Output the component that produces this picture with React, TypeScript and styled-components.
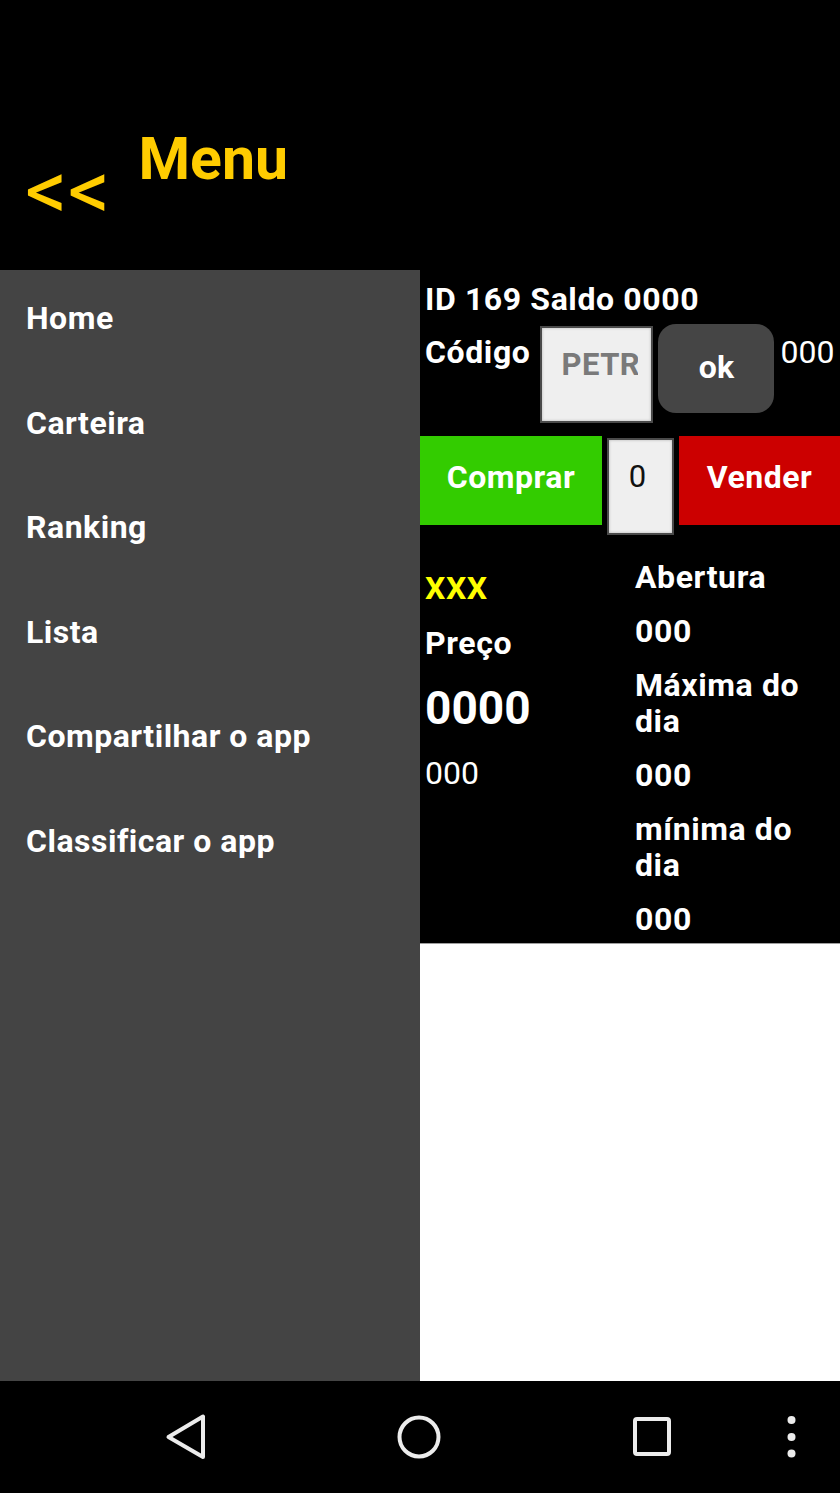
import React from 'react';
import styled, { createGlobalStyle } from 'styled-components';

const GlobalStyle = createGlobalStyle`
  html, body {
    margin: 0;
    padding: 0;
    background: #000;
  }
  * {
    box-sizing: border-box;
  }
`;

const menuItems = ['Home', 'Carteira', 'Ranking', 'Lista', 'Compartilhar o app', 'Classificar o app'];

const App: React.FC = () => {
    return (
        <Page>
            <GlobalStyle />
            <Header>
                <BackLink>&lt;&lt;</BackLink>
                <Title>Menu</Title>
            </Header>

            <Body>
                <Drawer>
                    {menuItems.map((item) => (
                        <MenuItem key={item}>{item}</MenuItem>
                    ))}
                </Drawer>

                <Content>
                    <Panel>
                        <InfoLine>ID 169 Saldo 0000</InfoLine>

                        <CodeRow>
                            <Label>Código</Label>
                            <CodeInput defaultValue="PETR" readOnly />
                            <OkButton>ok</OkButton>
                            <Value>000</Value>
                        </CodeRow>

                        <TradeRow>
                            <TradeButton $bg="#33cc00" $width="182px">Comprar</TradeButton>
                            <QtyInput defaultValue="0" readOnly />
                            <TradeButton $bg="#cc0000" $width="auto" $grow>Vender</TradeButton>
                        </TradeRow>

                        <Stats>
                            <Column $top={35} $gap={19}>
                                <Line $color="#ffff00">XXX</Line>
                                <Line>Preço</Line>
                                <BigPrice>0000</BigPrice>
                                <Line $regular>000</Line>
                            </Column>
                            <Column $top={24} $gap={18} $bottom={6}>
                                <Line>Abertura</Line>
                                <Line>000</Line>
                                <Line>Máxima do dia</Line>
                                <Line>000</Line>
                                <Line>mínima do dia</Line>
                                <Line>000</Line>
                            </Column>
                        </Stats>
                    </Panel>
                    <Blank />
                </Content>
            </Body>

            <NavBar>
                <NavSlot>
                    <svg width="60" height="60" viewBox="0 0 60 60">
                        <polygon
                            points="12.5,30 47,9.5 47,50"
                            fill="none"
                            stroke="#ececec"
                            strokeWidth="4"
                            strokeLinejoin="round"
                        />
                    </svg>
                </NavSlot>
                <NavSlot>
                    <svg width="60" height="60" viewBox="0 0 60 60">
                        <circle cx="30" cy="30" r="19.5" fill="none" stroke="#ececec" strokeWidth="4" />
                    </svg>
                </NavSlot>
                <NavSlot>
                    <svg width="60" height="60" viewBox="0 0 60 60">
                        <rect x="13" y="12" width="34" height="35" rx="2" fill="none" stroke="#ececec" strokeWidth="4" />
                    </svg>
                </NavSlot>
                <MoreSlot>
                    <svg width="20" height="60" viewBox="0 0 20 60">
                        <circle cx="10.5" cy="13" r="4" fill="#ececec" />
                        <circle cx="10.5" cy="30" r="4" fill="#ececec" />
                        <circle cx="10.5" cy="46.5" r="4" fill="#ececec" />
                    </svg>
                </MoreSlot>
            </NavBar>
        </Page>
    );
};

const Page = styled.div`
  width: 840px;
  height: 1493px;
  display: flex;
  flex-direction: column;
  background: #000;
  font-family: Roboto, 'Noto Sans', 'Liberation Sans', sans-serif;
  overflow: hidden;
`;

const Header = styled.header`
  height: 270px;
  flex-shrink: 0;
  display: flex;
  align-items: flex-start;
  gap: 28px;
  padding: 124px 0 0 25px;
  background: #000;
`;

const BackLink = styled.span`
  margin-top: 17px;
  font-size: 84px;
  line-height: 100px;
  font-weight: 400;
  color: #ffcc00;
`;

const Title = styled.h1`
  margin: 0;
  font-size: 59px;
  line-height: 70px;
  font-weight: 700;
  color: #ffcc00;
`;

const Body = styled.div`
  flex: 1;
  display: flex;
  min-height: 0;
`;

const Drawer = styled.nav`
  width: 420px;
  flex-shrink: 0;
  display: flex;
  flex-direction: column;
  background: #444444;
`;

const MenuItem = styled.div`
  padding: 30px 26px 38.5px;
  font-size: 32px;
  line-height: 36px;
  font-weight: 700;
  letter-spacing: 0.5px;
  color: #ffffff;
`;

const Content = styled.main`
  flex: 1;
  display: flex;
  flex-direction: column;
  background: #ffffff;
`;

const Panel = styled.section`
  background: #000;
  border-bottom: 1px solid #9e9e9e;
  padding-top: 10px;
  color: #ffffff;
  font-size: 32px;
  letter-spacing: 0.6px;
`;

const InfoLine = styled.div`
  padding-left: 5px;
  line-height: 38px;
  font-weight: 700;
`;

const CodeRow = styled.div`
  display: flex;
  align-items: flex-start;
  margin-top: 6px;
  padding-left: 5px;
`;

const Label = styled.span`
  margin-top: 9px;
  line-height: 38px;
  font-weight: 700;
`;

const CodeInput = styled.input`
  width: 113px;
  height: 97px;
  margin: 2px 0 0 10px;
  padding: 0 13px 20px 19px;
  border: 2px solid #4a4a4a;
  background: #efefef;
  box-shadow: inset 0 0 3px rgba(0, 0, 0, 0.25);
  font-family: inherit;
  font-size: 31px;
  letter-spacing: 0.5px;
  font-weight: 700;
  color: #7a7a7a;
  outline: none;
`;

const OkButton = styled.button`
  width: 116px;
  height: 89px;
  margin-left: 5px;
  padding: 0 0 4px;
  border: none;
  border-radius: 18px;
  background: #454545;
  font-family: inherit;
  font-size: 32px;
  font-weight: 700;
  color: #ffffff;
`;

const Value = styled.span`
  margin: 9px 0 0 6px;
  line-height: 38px;
  font-weight: 400;
  letter-spacing: 0;
`;

const TradeRow = styled.div`
  display: flex;
  align-items: flex-start;
  margin-top: 13px;
`;

const TradeButton = styled.button<{ $bg: string; $width: string; $grow?: boolean }>`
  width: ${({ $width }) => $width};
  flex: ${({ $grow }) => ($grow ? 1 : '0 0 auto')};
  height: 89px;
  padding: 0 0 8px;
  border: none;
  background: ${({ $bg }) => $bg};
  font-family: inherit;
  font-size: 32px;
  letter-spacing: 0.5px;
  font-weight: 700;
  color: #ffffff;
`;

const QtyInput = styled.input`
  width: 67px;
  height: 97px;
  margin: 2px 5px 0;
  padding: 0 6px 21px 0;
  border: 2px solid #4a4a4a;
  background: #efefef;
  box-shadow: inset 0 0 3px rgba(0, 0, 0, 0.25);
  font-family: inherit;
  font-size: 31px;
  font-weight: 400;
  color: #111;
  text-align: center;
  outline: none;
`;

const Stats = styled.div`
  display: flex;
`;

const Column = styled.div<{ $top: number; $gap: number; $bottom?: number }>`
  flex: 1;
  display: flex;
  flex-direction: column;
  gap: ${({ $gap }) => $gap}px;
  padding: ${({ $top }) => $top}px 12px ${({ $bottom }) => $bottom ?? 0}px 5px;
`;

const Line = styled.div<{ $color?: string; $regular?: boolean }>`
  line-height: 36px;
  font-weight: ${({ $regular }) => ($regular ? 400 : 700)};
  letter-spacing: ${({ $regular }) => ($regular ? '0' : '0.6px')};
  color: ${({ $color }) => $color ?? '#ffffff'};
`;

const BigPrice = styled.div`
  font-size: 46px;
  line-height: 56px;
  font-weight: 700;
  letter-spacing: 0;
`;

const Blank = styled.div`
  flex: 1;
  background: #ffffff;
`;

const NavBar = styled.footer`
  height: 112px;
  flex-shrink: 0;
  display: flex;
  align-items: center;
  gap: 173px;
  padding-left: 156px;
  background: #000;
`;

const NavSlot = styled.div`
  width: 60px;
  height: 60px;

  svg {
    display: block;
  }
`;

const MoreSlot = styled.div`
  width: 20px;
  height: 60px;
  margin-left: -74px;

  svg {
    display: block;
  }
`;

export default App;
